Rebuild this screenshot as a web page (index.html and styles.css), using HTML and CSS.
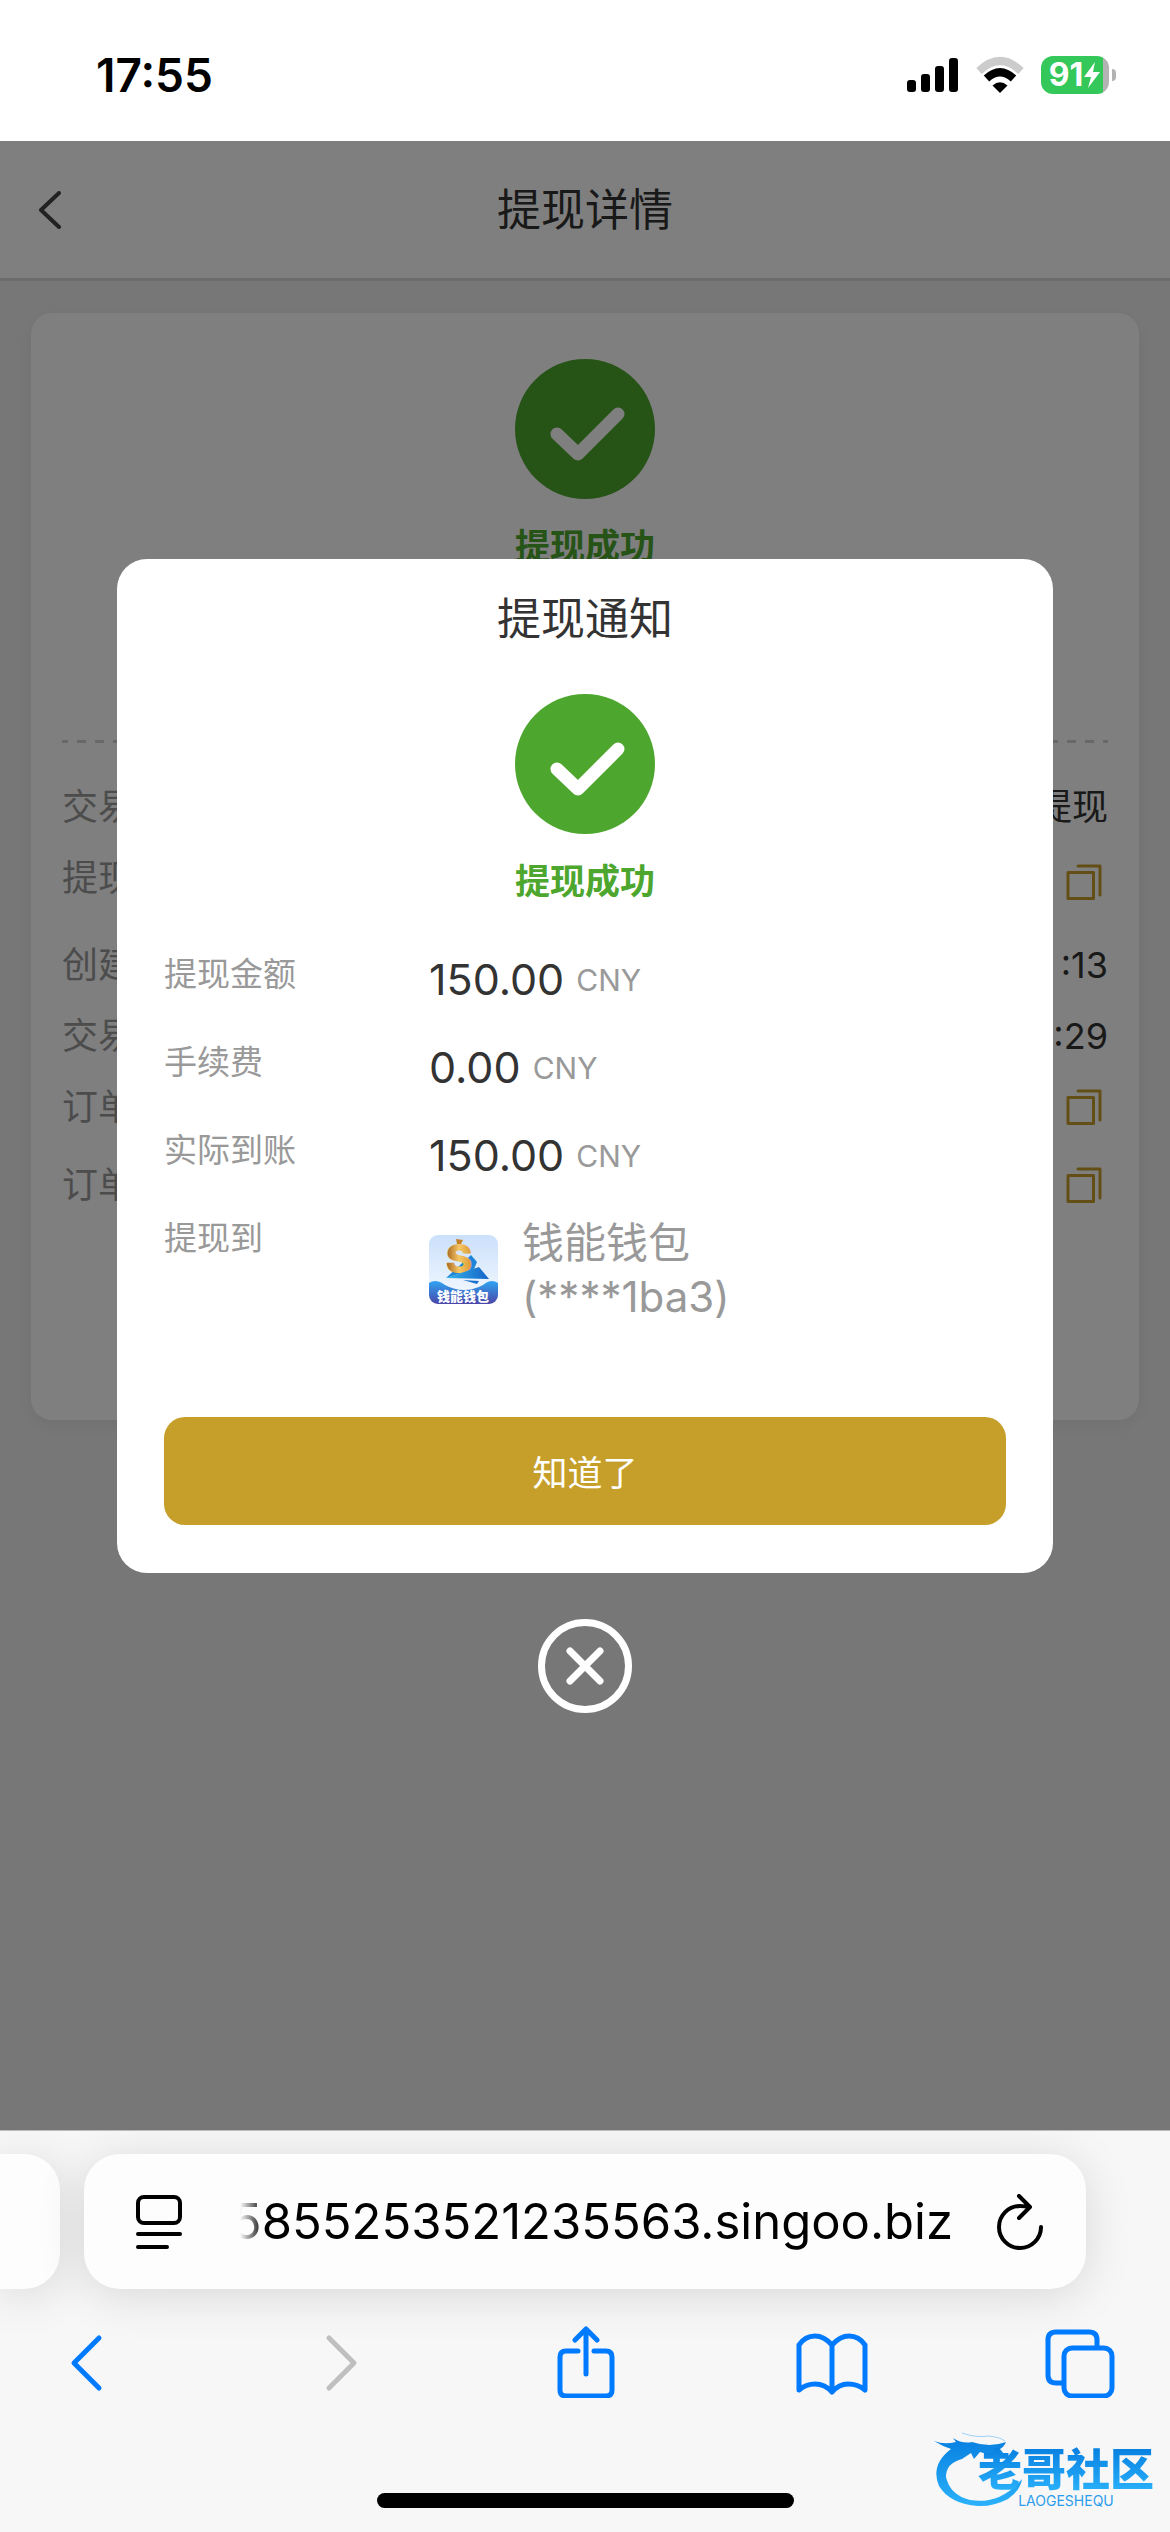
FILE: index.html
```html
<!DOCTYPE html>
<html lang="zh-CN">
<head>
  <meta charset="UTF-8" />
  <meta name="viewport" content="width=device-width, initial-scale=1.0" />
  <title>提现详情</title>
  <link rel="stylesheet" href="styles.css">
</head>
<body>
  <svg width="0" height="0" class="defs" aria-hidden="true">
    <symbol id="icon-copy" viewBox="0 0 36 37">
      <path d="M2 8.5H27.500V34.500H2ZM12 2H34V31" fill="none" stroke="currentColor" stroke-width="3" stroke-linecap="round" stroke-linejoin="round" />
    </symbol>
    <symbol id="icon-success" viewBox="0 0 140 140">
      <circle cx="70" cy="70" r="70" fill="#4da62d" />
      <path d="M42 75L63 95L103 55" fill="none" stroke="#fff" stroke-width="13" stroke-linecap="round" stroke-linejoin="round" />
    </symbol>
  </svg>

  <div class="status-bar">
    <span class="time">17:55</span>
    <div class="status-icons">
      <svg width="52" height="36" viewBox="0 0 52 36">
        <rect x="0" y="23" width="9" height="12" rx="3" />
        <rect x="14" y="17" width="9" height="18" rx="3" />
        <rect x="28" y="9" width="9" height="26" rx="3" />
        <rect x="42" y="1" width="9" height="34" rx="3" />
      </svg>
      <svg width="50" height="38" viewBox="0 0 50 38">
        <path d="M4 15Q25 -5 46 15" fill="none" stroke="#ccc" stroke-width="8" />
        <path d="M11.500 22.500Q25 10 38.500 22.500" fill="none" stroke="#000" stroke-width="8" />
        <path d="M25 37L17.500 29.500Q25 23 32.500 29.500Z" />
      </svg>
      <div class="battery">
        <span>91</span>
        <svg width="18" height="26" viewBox="0 0 18 26"><path d="M12 0L1 15H8L5 26L17 10H10Z" fill="#fff" /></svg>
      </div>
    </div>
  </div>

  <main class="page">
    <header class="header">
      <button class="back" aria-label="返回">
        <svg width="24" height="38" viewBox="0 0 24 38"><path d="M21 2L3 19L21 36" fill="none" stroke="#444" stroke-width="4" stroke-linecap="round" stroke-linejoin="round" /></svg>
      </button>
      <h1>提现详情</h1>
    </header>

    <section class="card">
      <svg class="success-icon"><use href="#icon-success" /></svg>
      <p class="success-text">提现成功</p>
      <hr class="divider">
      <ul class="details">
        <li><span>交易</span><b>提现</b></li>
        <li class="method"><span>提现</span><button aria-label="复制"><svg><use href="#icon-copy" /></svg></button></li>
        <li><span>创建</span><b>:13</b></li>
        <li><span>交易</span><b>:29</b></li>
        <li class="order"><span>订单</span><button aria-label="复制"><svg><use href="#icon-copy" /></svg></button></li>
        <li class="order"><span>订单</span><button aria-label="复制"><svg><use href="#icon-copy" /></svg></button></li>
      </ul>
    </section>

    <div class="overlay" id="overlay">
      <div class="modal" role="dialog" aria-labelledby="modalTitle">
        <h2 id="modalTitle">提现通知</h2>
        <svg class="success-icon"><use href="#icon-success" /></svg>
        <p class="success-text">提现成功</p>
        <dl class="summary">
          <dt>提现金额</dt>
          <dd>150.00 <small>CNY</small></dd>
          <dt>手续费</dt>
          <dd>0.00 <small>CNY</small></dd>
          <dt>实际到账</dt>
          <dd>150.00 <small>CNY</small></dd>
          <dt>提现到</dt>
          <dd class="wallet">
            <svg width="69" height="69" viewBox="0 0 69 69">
              <defs>
                <linearGradient id="sky" x1="0" y1="0" x2="0" y2="1"><stop offset="0" stop-color="#cbe0fb" /><stop offset="1" stop-color="#f7fbff" /></linearGradient>
                <linearGradient id="wave" x1="0" y1="0" x2="0" y2="1"><stop offset="0" stop-color="#2fa5f3" /><stop offset="1" stop-color="#4a45a8" /></linearGradient>
                <linearGradient id="plane" x1="0" y1="0" x2="1" y2="0"><stop offset="0" stop-color="#35b4e8" /><stop offset="1" stop-color="#1463c8" /></linearGradient>
                <linearGradient id="gold" x1="0" y1="0" x2="1" y2="0"><stop offset="0" stop-color="#a35f1c" /><stop offset=".5" stop-color="#f5c766" /><stop offset="1" stop-color="#d9962f" /></linearGradient>
                <clipPath id="tile"><rect width="69" height="69" rx="9" /></clipPath>
              </defs>
              <g clip-path="url(#tile)">
                <rect width="69" height="69" fill="url(#sky)" />
                <path d="M17 43L42 20L48 27L45 34Z" fill="#1e86d8" />
                <text class="dollar" x="30" y="38" text-anchor="middle" fill="url(#gold)">S</text>
                <path d="M27 4L34 5L32 9H28Z" fill="#c5812c" />
                <path d="M17 43L50 32L60 44Z" fill="url(#plane)" />
                <path d="M34 45L50 46L48 49Z" fill="#1b73cf" />
                <path d="M0 48Q7 43 16 50Q35 60 54 50Q62 43 69 48V69H0Z" fill="url(#wave)" />
                <text class="wallet-label" x="34" y="66" text-anchor="middle" fill="#fff">钱能钱包</text>
              </g>
            </svg>
            <span>钱能钱包<br>(****1ba3)</span>
          </dd>
        </dl>
        <button class="confirm" onclick="closeModal()">知道了</button>
      </div>
      <button class="close" aria-label="关闭" onclick="closeModal()">
        <svg width="94" height="94" viewBox="0 0 94 94">
          <circle cx="47" cy="47" r="43.500" fill="none" stroke="#fff" stroke-width="7" />
          <path d="M32 32L62 62M62 32L32 62" stroke="#fff" stroke-width="7" stroke-linecap="round" />
        </svg>
      </button>
    </div>
  </main>

  <footer class="browser">
    <div class="tabs">
      <div class="tab-prev"></div>
      <div class="address">
        <button aria-label="阅读器">
          <svg width="46" height="56" viewBox="0 0 46 56" fill="none" stroke="#000" stroke-width="4" stroke-linecap="round">
            <rect x="2" y="3" width="42" height="26" rx="6" />
            <path d="M2 40H44M2 53H31" />
          </svg>
        </button>
        <div class="url"><span>5855253521235563.singoo.biz</span></div>
        <button aria-label="刷新">
          <svg width="46" height="56" viewBox="0 0 46 56" fill="none" stroke="#000" stroke-width="4" stroke-linecap="round" stroke-linejoin="round">
            <path d="M32 13.500Q28 12 23 12A21 21 0 1 0 44 33M22 2L33 13L22 24" />
          </svg>
        </button>
      </div>
    </div>
    <nav class="toolbar">
      <button aria-label="后退"><svg viewBox="0 0 72 72"><path d="M48 12L23 37L48 62" /></svg></button>
      <button class="off" aria-label="前进" disabled><svg viewBox="0 0 72 72"><path d="M30 12L55 37L30 62" /></svg></button>
      <button aria-label="分享"><svg viewBox="0 0 72 72"><path d="M30 25H18Q12 25 12 31V64Q12 70 18 70H58Q64 70 64 64V31Q64 25 58 25H46M38 48V3M27 14L38 3L49 14" /></svg></button>
      <button aria-label="书签"><svg viewBox="0 0 72 72"><path d="M36 19Q28 10 19 10Q9 10 3 19V64Q10 58 19 58Q29 58 36 66Q43 58 52 58Q62 58 69 64V19Q63 10 53 10Q44 10 36 19V65" /></svg></button>
      <button aria-label="标签页"><svg viewBox="0 0 72 72"><path d="M18 57H12Q4 57 4 49V14Q4 6 12 6H45Q53 6 53 14V21" /><rect x="20" y="22" width="48" height="48" rx="8" /></svg></button>
    </nav>
    <div class="home-indicator"></div>
    <div class="watermark">
      <svg width="92" height="78" viewBox="0 0 92 78">
        <defs><linearGradient id="dragon" x1="0" y1="0" x2="0" y2="1"><stop offset="0" stop-color="#077fe0" /><stop offset="1" stop-color="#2bb2fb" /></linearGradient></defs>
        <path d="M0 10Q10 14 22 11L19 7Q28 13 38 11Q56 17 72 11Q70 16 66 18L70 23Q62 22 56 24L46 21L40 28L37 22L28 28Q12 32 12 46Q16 64 36 69Q66 74 88 48Q86 60 74 68Q58 76 44 75Q16 73 5 55Q-4 34 17 18Q8 15 0 10Z" fill="url(#dragon)" />
        <path d="M28 2Q42 7 54 5Q66 6 71 10" fill="none" stroke="#9ed2f7" />
      </svg>
      <div class="watermark-text">
        <strong>老哥社区</strong>
        <span>LAOGESHEQU</span>
      </div>
    </div>
  </footer>

  <script>
    function closeModal() {
      document.getElementById('overlay').style.display = 'none';
    }
  </script>
</body>
</html>
```
FILE: styles.css
```css
* {
  box-sizing: border-box;
}
body {
  display: flex;
  flex-direction: column;
  min-height: 100vh;
  margin: 0;
  font-family: Inter, "Noto Sans CJK SC", sans-serif;
  color: #333;
  background: #fff;
}
h1, h2, p, ul, dl, dd {
  margin: 0;
  padding: 0;
}
button {
  padding: 0;
  border: none;
  background: none;
  font-family: inherit;
  cursor: pointer;
}
svg {
  display: block;
}
.defs {
  position: absolute;
}

/* status bar */
.status-bar {
  display: flex;
  justify-content: space-between;
  align-items: center;
  height: 141px;
  padding: 8px 54px 0 96px;
  color: #000;
}
.time {
  font-size: 46px;
  font-weight: 600;
}
.status-icons {
  display: flex;
  align-items: center;
  gap: 16px;
}
.battery {
  position: relative;
  display: flex;
  align-items: center;
  justify-content: center;
  width: 68px;
  height: 38px;
  margin-right: 7px;
  border-radius: 12px;
  background: linear-gradient(to right, #34c759 62px, #b3b3b3 62px);
  color: #fff;
  font-size: 32px;
  font-weight: 700;
}
.battery::after {
  content: "";
  position: absolute;
  right: -7px;
  top: 13px;
  width: 4px;
  height: 12px;
  border-radius: 0 4px 4px 0;
  background: #b3b3b3;
}

/* page under the overlay */
.page {
  position: relative;
  flex: 1;
  background: #efefef;
}
.header {
  display: grid;
  grid-template-columns: 1fr auto 1fr;
  align-items: center;
  height: 140px;
  padding: 0 38px;
  background: #fff;
  border-bottom: 3px solid #d8d8d8;
}
.back {
  justify-self: start;
}
.header h1, .modal h2 {
  font-size: 44px;
  font-weight: 400;
  line-height: 64px;
  text-align: center;
}
.card {
  margin: 32px 31px;
  padding: 46px 31px 192px;
  border-radius: 21px;
  background: #fff;
  box-shadow: 0 6px 18px rgba(0,0,0,0.06);
}
.success-icon {
  width: 140px;
  height: 140px;
  margin: 0 auto;
}
.success-text {
  margin-top: 22px;
  color: #4da62d;
  font-size: 35px;
  font-weight: 700;
  line-height: 50px;
  text-align: center;
}
.divider {
  height: 3px;
  margin: 169px 0 29px;
  border: none;
  background: repeating-linear-gradient(to right, #d0d0d0 0 6px, transparent 6px 15px, #d0d0d0 15px 18px);
}
.details {
  list-style: none;
  font-size: 36px;
  line-height: 71px;
}
.details li {
  display: flex;
  justify-content: space-between;
  height: 71px;
}
.details li.method {
  height: 87px;
}
.details li.order {
  height: 78px;
}
.details span {
  color: #999;
}
.details b {
  font-weight: 400;
}
.details button {
  height: 78px;
  margin-right: 6px;
  color: #c69f2a;
}
.details .order button {
  height: 71px;
}
.details svg {
  width: 36px;
  height: 37px;
}

/* notice */
.overlay {
  position: absolute;
  inset: 0;
  display: flex;
  flex-direction: column;
  align-items: center;
  justify-content: center;
  gap: 46px;
  background: rgba(0,0,0,0.5);
}
.modal {
  width: 80%;
  padding: 28px 47px 48px;
  border-radius: 30px;
  background: #fff;
}
.modal h2 {
  margin-bottom: 43px;
}
.summary {
  display: grid;
  grid-template-columns: 265px 1fr;
  row-gap: 34px;
  margin: 46px 0 93px;
}
.summary dt {
  color: #999;
  font-size: 33px;
  line-height: 44px;
}
.summary dd {
  font-size: 43px;
  line-height: 54px;
}
.summary small {
  color: #999;
  font-size: 30px;
  line-height: 44px;
  vertical-align: 4px;
}
.summary .wallet {
  display: flex;
  align-items: center;
  gap: 24px;
  color: #999;
  font-size: 42px;
}
.dollar {
  font-size: 40px;
  font-weight: 900;
}
.wallet-label {
  font-size: 13px;
  font-weight: 900;
}
.confirm {
  display: block;
  width: 100%;
  height: 108px;
  border-radius: 21px;
  background: #c69f2a;
  color: #fff;
  font-size: 35px;
}

/* browser bar */
.browser {
  position: relative;
  overflow: hidden;
  border-top: 1px solid #bbb;
  background: #f7f7f7;
  color: #000;
}
.tabs {
  display: flex;
  gap: 24px;
  padding: 23px 84px 37px 0;
}
.tab-prev {
  flex: none;
  width: 60px;
  border-radius: 0 36px 36px 0;
}
.tab-prev, .address {
  background: #fdfdfd;
  box-shadow: 0 6px 48px rgba(0,0,0,0.13);
}
.address {
  display: flex;
  flex: 1;
  align-items: center;
  min-width: 0;
  height: 135px;
  padding: 0 43px 0 52px;
  border-radius: 36px;
}
.url {
  display: flex;
  flex: 1;
  justify-content: flex-end;
  min-width: 0;
  margin: 0 44px 0 58px;
  overflow: hidden;
  font-size: 49px;
  line-height: 70px;
  white-space: nowrap;
  mask-image: linear-gradient(to right, transparent, #000 24px);
}
.toolbar {
  display: flex;
  justify-content: space-between;
  padding: 0 54px 0 51px;
}
.toolbar svg {
  width: 72px;
  height: 72px;
  fill: none;
  stroke: #007aff;
  stroke-width: 5px;
  stroke-linecap: round;
  stroke-linejoin: round;
}
.toolbar .off svg {
  stroke: #bfbfbf;
}
.home-indicator {
  width: 417px;
  height: 15px;
  margin: 95px auto 24px;
  border-radius: 8px;
  background: #000;
}
.watermark {
  position: absolute;
  right: 16px;
  bottom: 23px;
  display: flex;
  align-items: flex-end;
}
.watermark-text {
  margin-left: -48px;
}
.watermark strong {
  display: block;
  background: linear-gradient(#077fe0, #2bb2fb);
  background-clip: text;
  color: transparent;
  font-size: 44px;
  font-weight: 900;
  line-height: 46px;
}
.watermark span {
  display: block;
  color: #2d9deb;
  font-size: 14px;
  line-height: 16px;
  text-align: center;
}
```
